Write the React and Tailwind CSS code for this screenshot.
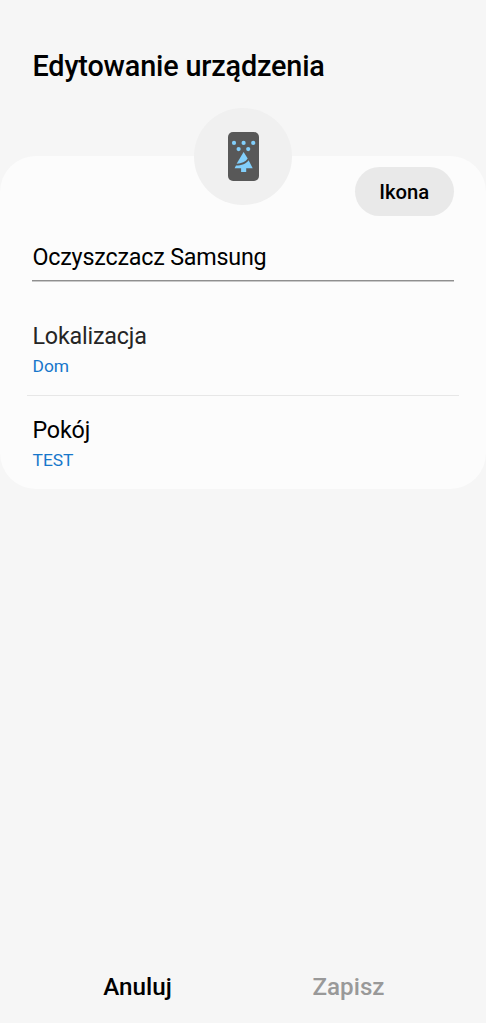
import React from "react";

const PurifierIcon = ({ className }) => (
  <svg viewBox="0 0 31 49" className={className}>
    <rect width="31" height="49" rx="5" fill="#585858" />
    <g fill="#82cffb">
      <circle cx="6" cy="10.9" r="2.1" />
      <circle cx="15.6" cy="10.9" r="2.1" />
      <circle cx="25.2" cy="10.9" r="2.1" />
      <circle cx="10.6" cy="17.1" r="2.1" />
      <circle cx="20.2" cy="17.1" r="2.1" />
      <path d="M15.6 20L19.7 26.6C17.6 29.9 13.6 31.4 8.6 31.7Z" />
      <path d="M20.6 28.2L24.7 36.2H18.2V40.1H13.1V36.2H6.6L8 33.6C13.6 33.4 18.3 31.7 20.6 28.2Z" />
    </g>
  </svg>
);

const SettingRow = ({ title, value, titleColor }) => (
  <div className="h-[95px] px-[5.5px] pt-[20px] last:pt-[19px]">
    <p className={`text-[23.3px] leading-[30px] tracking-[-0.2px] ${titleColor}`}>{title}</p>
    <p className="mt-[4px] text-[17.4px] leading-[22px] text-[#1777cb]">{value}</p>
  </div>
);

function App() {
  const settings = [
    { title: "Lokalizacja", value: "Dom", titleColor: "text-[#252525]" },
    { title: "Pokój", value: "TEST", titleColor: "text-black" },
  ];

  return (
    <div className="flex h-[1023px] w-[486px] flex-col overflow-hidden bg-[#f6f6f6] font-[Roboto,sans-serif] text-black">
      <h1 className="h-[156px] px-[32.5px] pt-[48px] text-[28.8px] font-medium leading-9 tracking-[-0.17px] whitespace-nowrap">
        Edytowanie urządzenia
      </h1>

      <main className="relative h-[333px] rounded-[36px] bg-[#fcfcfc] px-[27px]">
        <div className="absolute -top-[48px] left-[194px] flex h-[97px] w-[98px] items-center justify-center rounded-full bg-[#f0f0f0]">
          <PurifierIcon className="h-[49px] w-[31px]" />
        </div>

        <div className="flex justify-end pt-[11px] pr-[5.5px]">
          <button className="h-[49px] w-[98.5px] rounded-full bg-[#e9e9e9] pt-[2px] text-[20.3px] font-medium">
            Ikona
          </button>
        </div>

        <div className="mx-[5.4px] mt-[24px] h-[41px] border-b border-[#8f8f8f] text-[23.3px] leading-[34px] tracking-[-0.2px] shadow-[0_1px_0_#c9c9c9]">
          Oczyszczacz Samsung
        </div>

        <div className="mt-[20px] divide-y divide-[#e7e7e7]">
          {settings.map((item) => (
            <SettingRow key={item.title} {...item} />
          ))}
        </div>
      </main>

      <footer className="mt-auto grid h-[74px] grid-cols-2 px-[32px] pt-[2px] text-[24.2px] font-medium">
        <button>Anuluj</button>
        <button className="text-[#999999]">Zapisz</button>
      </footer>
    </div>
  );
}

export default App;
